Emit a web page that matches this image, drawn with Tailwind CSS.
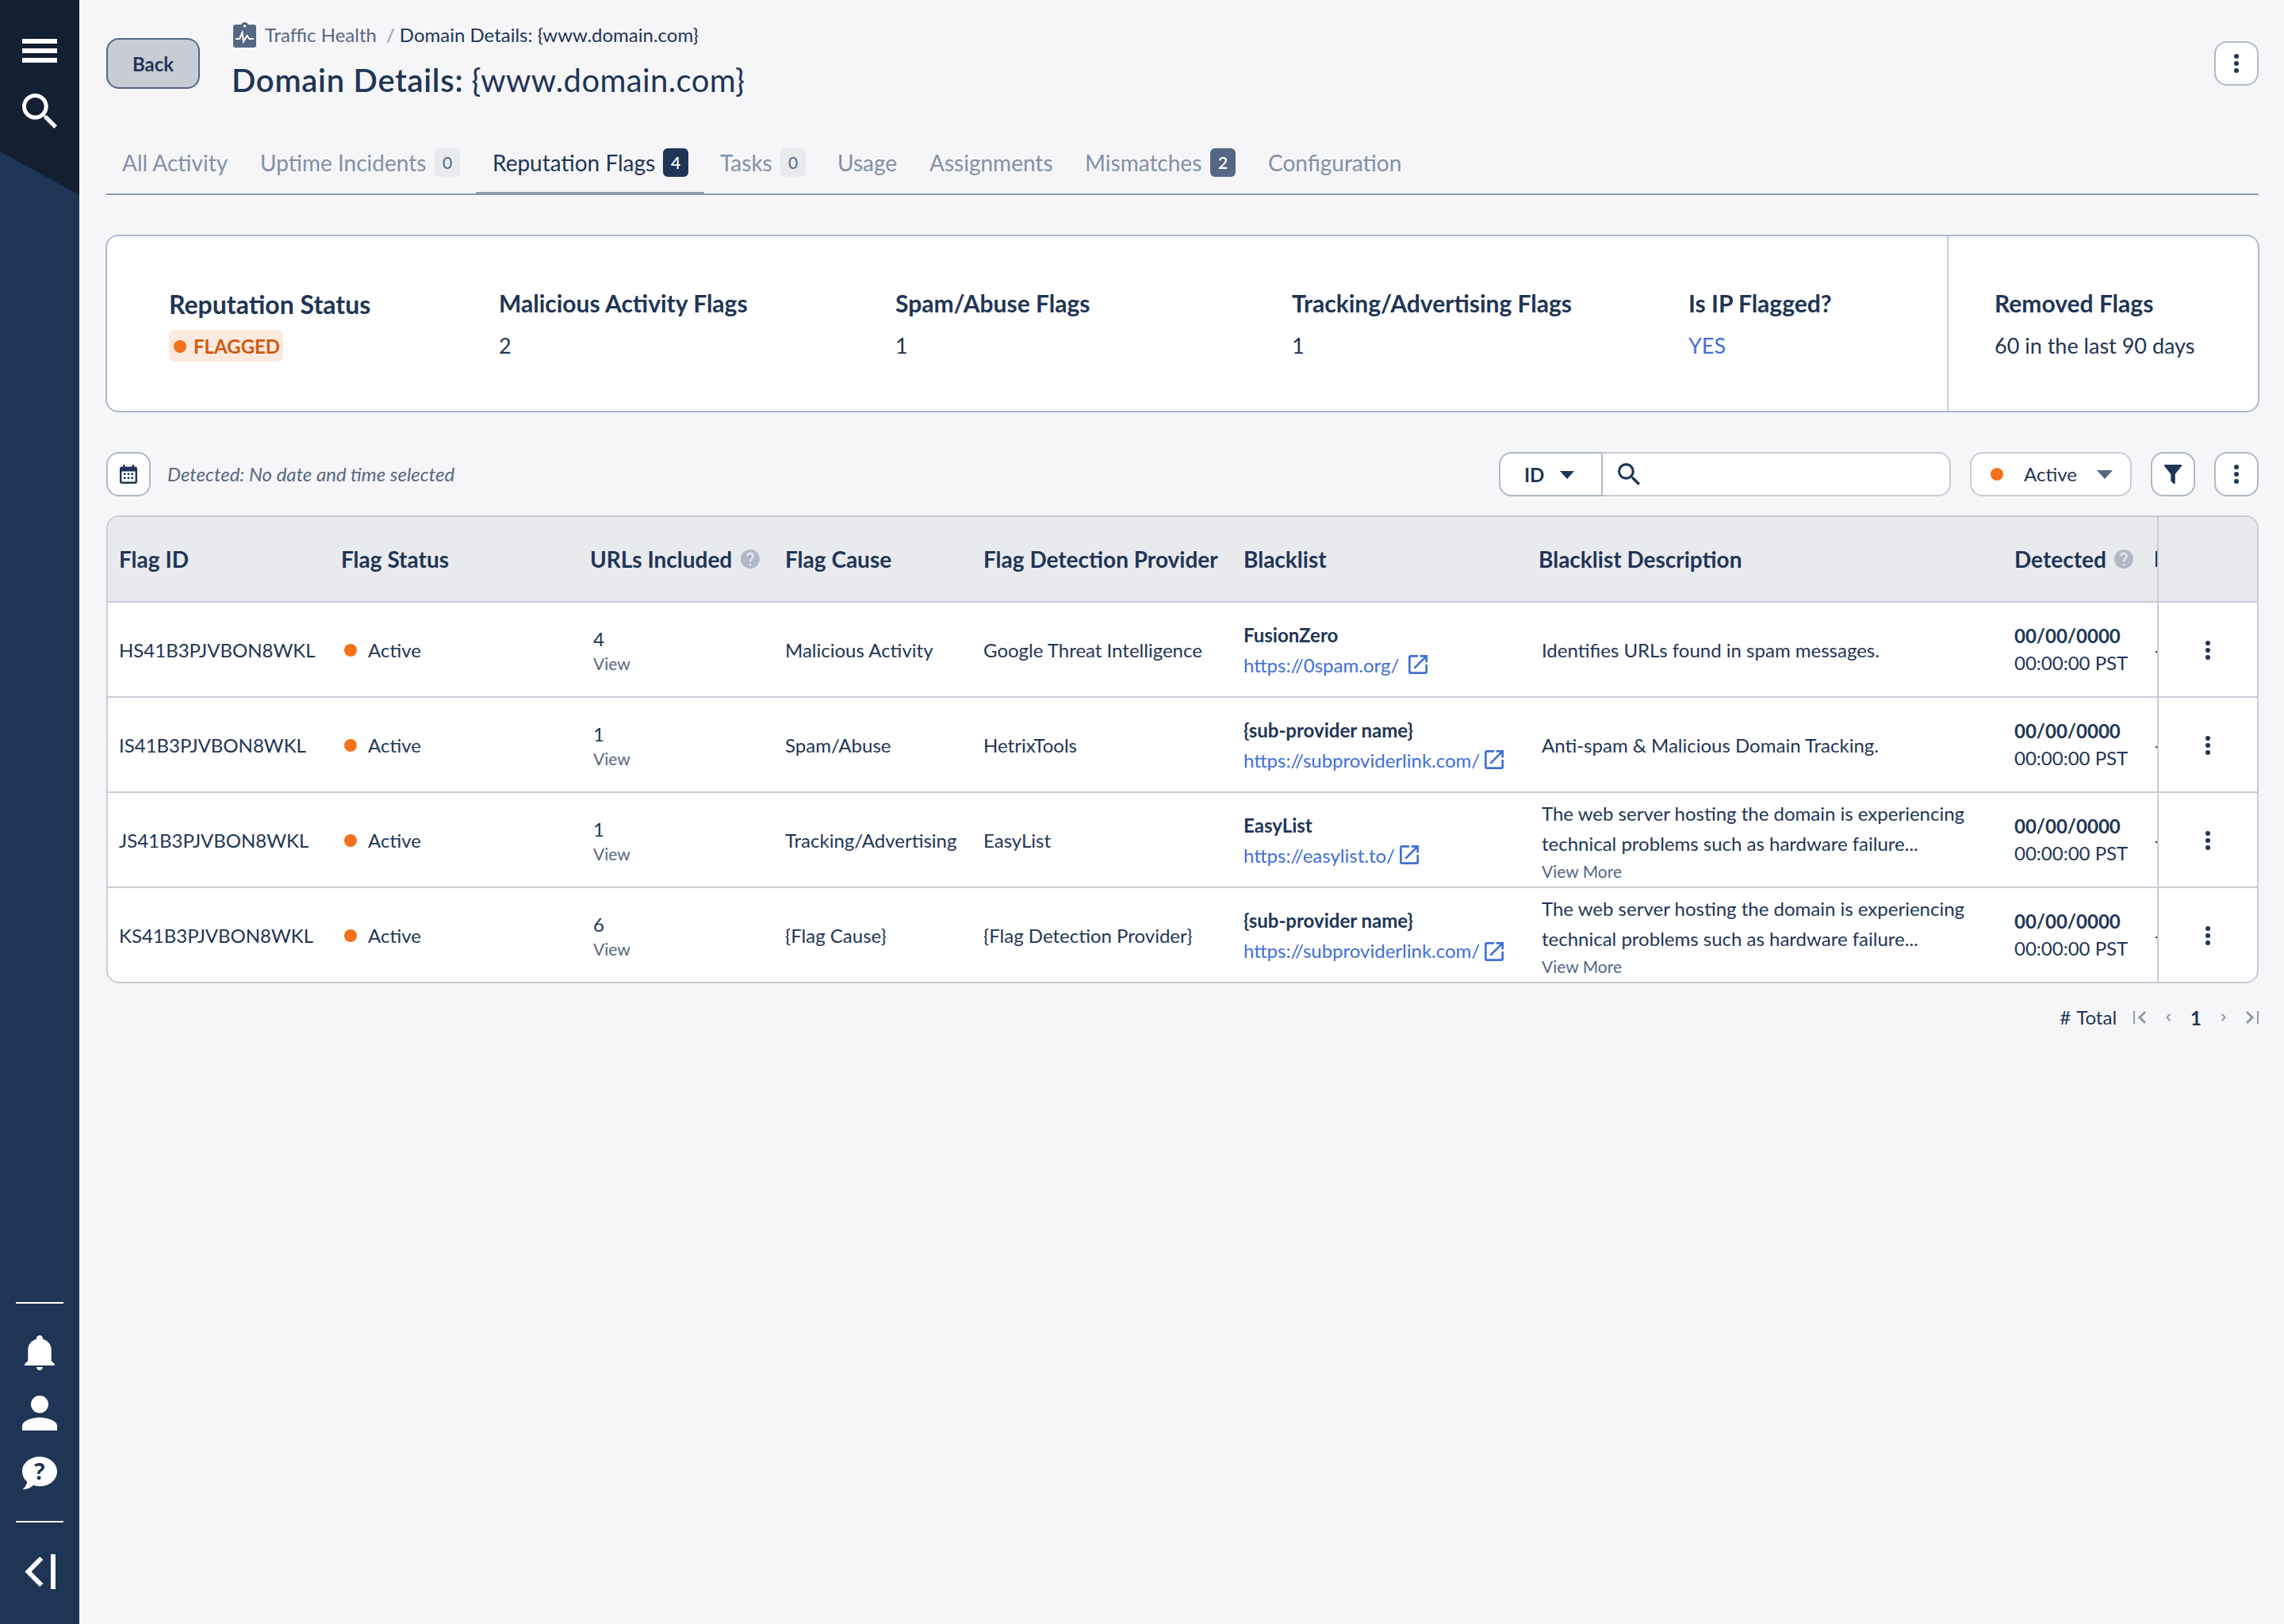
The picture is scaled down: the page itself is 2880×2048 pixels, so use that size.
<!DOCTYPE html>
<html lang="en">
<head>
    <meta charset="UTF-8" />
    <meta name="viewport" content="width=device-width, initial-scale=1.0"/>
    <title>Domain Details</title>
    <script src="https://cdn.jsdelivr.net/npm/@tailwindcss/browser@4"></script>
    <style>
        body { font-family: 'Lato', sans-serif; }
    </style>
</head>
<body class="flex h-[2048px] w-[2880px] overflow-hidden bg-[#f6f6f8] text-[24px] leading-[30px] text-[#1f3556]">
    <!-- Icons -->
    <svg class="hidden">
        <symbol id="search" viewBox="3 3 17.49 17.49"><path d="M15.5 14h-.79l-.28-.27A6.47 6.47 0 0 0 16 9.5 6.5 6.5 0 1 0 9.5 16c1.61 0 3.09-.59 4.23-1.57l.27.28v.79l5 4.99L20.49 19zm-6 0C7.01 14 5 11.99 5 9.5S7.01 5 9.5 5 14 7.01 14 9.5 11.99 14 9.5 14z"/></symbol>
        <symbol id="dots" viewBox="0 0 6 24"><circle cx="3" cy="3.1" r="3"/><circle cx="3" cy="12" r="3"/><circle cx="3" cy="20.9" r="3"/></symbol>
        <symbol id="help" viewBox="2 2 20 20"><path d="M12 2C6.48 2 2 6.48 2 12s4.48 10 10 10 10-4.48 10-10S17.52 2 12 2zm1 17h-2v-2h2v2zm2.07-7.75-.9.92C13.45 12.9 13 13.5 13 15h-2v-.5c0-1.1.45-2.1 1.17-2.83l1.24-1.26c.37-.36.59-.86.59-1.41 0-1.1-.9-2-2-2s-2 .9-2 2H8c0-2.21 1.79-4 4-4s4 1.79 4 4c0 .88-.36 1.68-.93 2.25z"/></symbol>
        <symbol id="open" viewBox="3 3 18 18"><path d="M19 19H5V5h7V3H5c-1.11 0-2 .9-2 2v14c0 1.1.89 2 2 2h14c1.1 0 2-.9 2-2v-7h-2v7zM14 3v2h3.59l-9.83 9.83 1.41 1.41L19 6.41V10h2V3h-7z"/></symbol>
    </svg>

    <!-- Sidebar -->
    <aside class="flex w-[100px] shrink-0 flex-col justify-between bg-[#1f3556] text-white">
        <div class="flex h-[246px] flex-col items-center bg-[#122031] pt-[49px] [clip-path:polygon(0_0,100%_0,100%_100%,0_191px)]">
            <div class="flex w-[44px] flex-col gap-[6px]">
                <span class="h-[6px] bg-white"></span>
                <span class="h-[6px] bg-white"></span>
                <span class="h-[6px] bg-white"></span>
            </div>
            <svg class="mt-[39px] size-[44px] fill-white"><use href="#search"/></svg>
        </div>
        <div class="flex flex-col items-center pb-[44px]">
            <span class="h-[2px] w-[60px] bg-white"></span>
            <svg class="mt-[40px] h-[44px] w-[38px] fill-white" viewBox="0 0 38 44"><path d="M19 0c-2.400 0-4.100 1.800-4.100 4.300v.5C8.500 6.600 4.300 11.600 4.300 18v14L0 36.200V38h38v-1.800L33.700 32V18c0-6.400-4.200-11.400-10.600-13.200v-.5C23.100 1.800 21.400 0 19 0zM14.900 40c.2 2.300 1.900 4 4.100 4s3.900-1.700 4.100-4z"/></svg>
            <svg class="mt-[32px] size-[44px] fill-white" viewBox="0 0 44 44"><circle cx="22" cy="11" r="11"/><path d="M22 27.500C14.700 27.500 0 30.800 0 38.500V44h44v-5.500c0-7.700-14.700-11-22-11z"/></svg>
            <div class="relative mt-[33px] h-[42px] w-[44px]">
                <svg class="size-full fill-white" viewBox="0 0 44 42"><path d="M22 0C9.800 0 0 8.200 0 18.700c0 5 2.200 9.500 6.200 12.900C5.600 35.600 3.500 39 .6 41.300c5.200.5 9.700-1.900 13.600-5.200 2.500.8 5.100 1.200 7.800 1.200 12.200 0 22-8.200 22-18.600S34.200 0 22 0z"/></svg>
                <span class="absolute inset-x-0 top-[3px] text-center font-['Open_Sans'] text-[28px] leading-[30px] font-bold text-[#1f3556]">?</span>
            </div>
            <span class="mt-[39px] h-[2px] w-[60px] bg-white"></span>
            <svg class="mt-[40px] ml-[1px] h-[44px] w-[39px] fill-none stroke-white stroke-[6]" viewBox="0 0 39 44"><path d="M21.200 5 4.500 22l16.700 17M36 0v44"/></svg>
        </div>
    </aside>

    <main class="flex w-[2749px] flex-col pl-[33px]">
        <!-- Page header -->
        <header class="flex h-[148px] items-start pl-px">
            <button class="mt-[48px] h-[64px] w-[118px] rounded-[16px] border-2 border-[#566783] bg-[#c8ccd5] pt-[2px] font-bold">Back</button>
            <div class="ml-[42px]">
                <div class="mt-[28px] flex h-[32px] items-center">
                    <svg class="h-[32px] w-[29px]" viewBox="0 0 29 32"><path class="fill-[#566783]" d="M3 3h7.300a4.500 4.500 0 0 1 8.400 0H26a3 3 0 0 1 3 3v23a3 3 0 0 1-3 3H3a3 3 0 0 1-3-3V6a3 3 0 0 1 3-3z"/><circle class="fill-white" cx="14.500" cy="4.800" r="1.700"/><path class="fill-none stroke-white stroke-2" d="M3 21h5l3.500-8 1.500 11.500L17.500 17l3 4H26"/></svg>
                    <span class="ml-[11px] text-[#566783]">Traffic Health</span>
                    <span class="ml-[12px] text-[#8e9bae]">/</span>
                    <span class="ml-[6px]">Domain Details: {www.domain.com}</span>
                </div>
                <h1 class="mt-[17px] -ml-[2px] text-[40px] leading-[48px] whitespace-nowrap"><span class="font-semibold tracking-[0.7px]">Domain Details:</span> <span class="font-normal tracking-[0.4px]">{www.domain.com}</span></h1>
            </div>
            <button class="mt-[52px] ml-auto mr-px flex size-[56px] items-center justify-center rounded-[16px] border-2 border-[#aebac7] bg-white">
                <svg class="h-[24px] w-[6px] fill-[#1f3556]"><use href="#dots"/></svg>
            </button>
        </header>

        <!-- Tabs -->
        <nav class="mr-px ml-px mt-[24px] flex h-[74px] border-b-2 border-[#8e9bae] text-[28px] leading-[66px] whitespace-nowrap text-[#8390a5]">
            <a class="w-[174px] pl-[20px]">All Activity</a>
            <a class="flex w-[292px] items-start justify-between px-[20px]">Uptime Incidents <span class="mt-[15px] h-[36px] w-[32px] rounded-[6px] bg-[#e8eaee] text-center text-[21px] leading-[36px] text-[#566783]">0</span></a>
            <a class="flex h-[72px] w-[288px] items-start justify-between border-b-2 border-[#8e9bae] pr-[20px] pl-[21px] text-[#1f3556]">Reputation Flags <span class="mt-[15px] h-[36px] w-[32px] rounded-[6px] bg-[#1f3556] text-center text-[21px] leading-[36px] font-semibold text-white">4</span></a>
            <a class="flex w-[148px] items-start justify-between px-[20px]">Tasks <span class="mt-[15px] h-[36px] w-[32px] rounded-[6px] bg-[#e8eaee] text-center text-[21px] leading-[36px] text-[#566783]">0</span></a>
            <a class="w-[116px] pl-[20px]">Usage</a>
            <a class="w-[195px] pl-[20px]">Assignments</a>
            <a class="flex w-[231px] items-start justify-between pr-[20px] pl-[21px]">Mismatches <span class="mt-[15px] h-[36px] w-[32px] rounded-[6px] bg-[#566783] text-center text-[21px] leading-[36px] font-semibold text-white">2</span></a>
            <a class="pl-[21px]">Configuration</a>
        </nav>

        <!-- Summary -->
        <section class="mt-[50px] grid h-[224px] grid-cols-[416px_500px_500px_500px_326px_1fr] rounded-[16px] border-2 border-[#aebac7] bg-white pl-[78px] text-[27px] leading-[36px] whitespace-nowrap">
            <div class="pt-[68px]">
                <h2 class="text-[32px] leading-[36px] font-bold">Reputation Status</h2>
                <span class="mt-[14px] flex h-[40px] w-[144px] items-center rounded-[6px] bg-[#fdeadf] pt-px pl-[6px] text-[24px] font-bold text-[#d4590c]"><i class="mr-[9px] size-[16px] rounded-full bg-[#f3721c]"></i>FLAGGED</span>
            </div>
            <div class="pt-[66px]"><h2 class="text-[30px] font-bold">Malicious Activity Flags</h2><p class="mt-[18px]">2</p></div>
            <div class="pt-[66px]"><h2 class="text-[30px] font-bold">Spam/Abuse Flags</h2><p class="mt-[18px]">1</p></div>
            <div class="pt-[66px]"><h2 class="text-[30px] font-bold">Tracking/Advertising Flags</h2><p class="mt-[18px]">1</p></div>
            <div class="pt-[66px]"><h2 class="text-[30px] font-bold">Is IP Flagged?</h2><p class="mt-[18px] text-[#3f6fd8]">YES</p></div>
            <div class="border-l-2 border-[#c8ccd5] pt-[66px] pl-[58px]"><h2 class="text-[30px] font-bold">Removed Flags</h2><p class="mt-[18px]">60 in the last 90 days</p></div>
        </section>

        <!-- Filters -->
        <div class="mr-px ml-px mt-[50px] flex h-[56px] items-center">
            <button class="flex size-[56px] items-center justify-center rounded-[16px] border-2 border-[#aebac7] bg-white">
                <svg class="h-[24px] w-[22px]" viewBox="0 0 22 24"><path class="fill-[#1f3556]" fill-rule="evenodd" d="M4 0h2.400v2.400h9.200V0H18v2.400h1.600A2.400 2.400 0 0 1 22 4.800v16.800a2.400 2.400 0 0 1-2.400 2.400H2.400A2.400 2.400 0 0 1 0 21.600V4.800a2.400 2.400 0 0 1 2.400-2.400H4zM2.400 8.400v13.200h17.200V8.400zM5 10.500h2.600v2.600H5zm4.700 0h2.600v2.600H9.700zm4.700 0H17v2.600h-2.600zM5 15.500h2.600v2.600H5zm4.700 0h2.600v2.600H9.700zm4.700 0H17v2.600h-2.600z"/></svg>
            </button>
            <span class="ml-[21px] text-[#566783] italic">Detected: No date and time selected</span>
            <button class="ml-auto flex h-[56px] w-[131px] items-center rounded-l-[16px] border-2 border-[#aebac7] bg-white pt-px pl-[30px] font-bold">ID
                <svg class="ml-[20px] h-[10px] w-[18px] fill-[#1f3556]" viewBox="0 0 18 10"><path d="M0 0h18l-9 10z"/></svg>
            </button>
            <div class="flex h-[56px] w-[439px] items-center rounded-r-[16px] border-2 border-l-0 border-[#c8ccd5] bg-white pl-[19px]"><svg class="size-[28px] fill-[#1f3556]"><use href="#search"/></svg></div>
            <button class="ml-[24px] flex h-[56px] w-[204px] items-center rounded-[16px] border-2 border-[#c8ccd5] bg-white pl-[24px]">
                <i class="mr-[26px] size-[16px] rounded-full bg-[#f3721c]"></i>Active
                <svg class="ml-auto mr-[22px] h-[11px] w-[20px] fill-[#566783]" viewBox="0 0 20 11"><path d="M0 0h20L10 11z"/></svg>
            </button>
            <button class="ml-[24px] flex size-[56px] items-center justify-center rounded-[16px] border-2 border-[#aebac7] bg-white">
                <svg class="h-[24px] w-[22px] fill-[#1f3556]" viewBox="0 0 22 24"><path d="M0 0h22v1.500L13.700 12v12H12l-3.700-3.500V12L0 1.500z"/></svg>
            </button>
            <button class="ml-[24px] flex size-[56px] items-center justify-center rounded-[16px] border-2 border-[#aebac7] bg-white">
                <svg class="h-[24px] w-[6px] fill-[#1f3556]"><use href="#dots"/></svg>
            </button>
        </div>

        <!-- Flags table -->
        <section id="flag-table" class="mr-px ml-px mt-[24px] h-[590px] overflow-hidden rounded-[16px] border-2 border-[#c8ccd5] bg-white whitespace-nowrap">
            <div class="grid h-[108px] grid-cols-[280px_314px_246px_250px_328px_372px_600px_178px_2px_1fr] items-center border-b-2 border-[#c8ccd5] bg-[#e8eaee] pl-[14px] text-[28px] font-bold">
                <span>Flag ID</span>
                <span>Flag Status</span>
                <span class="flex items-center gap-[11px]">URLs Included <svg class="size-[24px] fill-[#b0b8c5]"><use href="#help"/></svg></span>
                <span>Flag Cause</span>
                <span>Flag Detection Provider</span>
                <span>Blacklist</span>
                <span>Blacklist Description</span>
                <span class="flex items-center gap-[10px]">Detected <svg class="size-[24px] fill-[#b0b8c5]"><use href="#help"/></svg></span>
                <i class="h-[20px] bg-[#1f3556]"></i>
                <span class="h-full border-l-2 border-[#c8ccd5]"></span>
            </div>
        </section>

        <!-- Pagination -->
        <footer class="mr-px mt-[28px] flex h-[30px] items-center justify-end">
            <span class="flex gap-[7px]"><span>#</span><span>Total</span></span>
            <svg class="ml-[21px] h-[16px] w-[16px] fill-none stroke-[#8e9bae]" viewBox="0 0 16 16"><path class="stroke-2" d="M1 0v16"/><path class="stroke-3" d="m15 1-7 7 7 7"/></svg>
            <svg class="ml-[25px] h-[10px] w-[6px] fill-none stroke-[#8e9bae] stroke-2" viewBox="0 0 6 10"><path d="M5.300.7 1.300 5l4 4.300"/></svg>
            <span class="ml-[25px] pt-px text-[24px] font-bold">1</span>
            <svg class="ml-[25px] h-[10px] w-[6px] fill-none stroke-[#8e9bae] stroke-2" viewBox="0 0 6 10"><path d="m.7.7 4 4.300-4 4.300"/></svg>
            <svg class="ml-[25px] h-[16px] w-[16px] fill-none stroke-[#8e9bae]" viewBox="0 0 16 16"><path class="stroke-2" d="M15 0v16"/><path class="stroke-3" d="m1 1 7 7-7 7"/></svg>
        </footer>
    </main>

    <script>
        const longText = 'The web server hosting the domain is experiencing<br>technical problems such as hardware failure...';
        const flags = [
            { id: 'HS41B3PJVBON8WKL', urls: 4, cause: 'Malicious Activity', provider: 'Google Threat Intelligence', list: 'FusionZero', link: 'https://0spam.org/', gap: 'ml-[12px] mt-[2px]', text: 'Identifies URLs found in spam messages.' },
            { id: 'IS41B3PJVBON8WKL', urls: 1, cause: 'Spam/Abuse', provider: 'HetrixTools', list: '{sub-provider name}', link: 'https://subproviderlink.com/', gap: 'ml-[6px] mt-[2px]', text: 'Anti-spam &amp; Malicious Domain Tracking.' },
            { id: 'JS41B3PJVBON8WKL', urls: 1, cause: 'Tracking/Advertising', provider: 'EasyList', list: 'EasyList', link: 'https://easylist.to/', gap: 'ml-[6px] mt-[2px]', text: longText, more: true },
            { id: 'KS41B3PJVBON8WKL', urls: 6, cause: '{Flag Cause}', provider: '{Flag Detection Provider}', list: '{sub-provider name}', link: 'https://subproviderlink.com/', gap: 'ml-[6px] mt-[4px]', text: longText, more: true }
        ];

        const table = document.getElementById('flag-table');
        flags.forEach(flag => {
            const row = document.createElement('div');
            row.className = 'grid h-[120px] grid-cols-[280px_314px_246px_250px_328px_372px_600px_178px_2px_1fr] items-center border-b-2 border-[#c8ccd5] pl-[14px]';
            row.innerHTML = `
                <span class="pt-[2px]">${flag.id}</span>
                <span class="flex items-center pt-[2px] pl-[4px]"><i class="mr-[14px] size-[16px] rounded-full bg-[#f3721c]"></i>Active</span>
                <div class="pt-[4px] pl-[4px]"><p>${flag.urls}</p><p class="-mb-px pt-px text-[21px] text-[#566783]">View</p></div>
                <span class="pt-[2px]">${flag.cause}</span>
                <span class="pt-[2px]">${flag.provider}</span>
                <div class="pt-[2px]">
                    <p class="font-bold">${flag.list}</p>
                    <p class="mt-[8px] flex h-[30px] items-start text-[#3f6fd8]">${flag.link}<svg class="${flag.gap} size-[24px] fill-[#3f6fd8]"><use href="#open"/></svg></p>
                </div>
                <div class="pt-[2px] pl-[4px]">
                    <p class="leading-[38px]">${flag.text}</p>
                    ${flag.more ? '<p class="-mb-px pt-px text-[21px] text-[#566783]">View More</p>' : ''}
                </div>
                <div><p class="font-bold leading-[34px]">00/00/0000</p><p class="leading-[34px]">00:00:00 PST</p></div>
                <i class="mt-[5px] h-[2px] bg-[#1f3556]"></i>
                <span class="flex h-full items-center justify-center border-l-2 border-[#c8ccd5] pt-[2px]"><svg class="h-[24px] w-[6px] fill-[#1f3556]"><use href="#dots"/></svg></span>
            `;
            table.appendChild(row);
        });
    </script>
</body>
</html>
